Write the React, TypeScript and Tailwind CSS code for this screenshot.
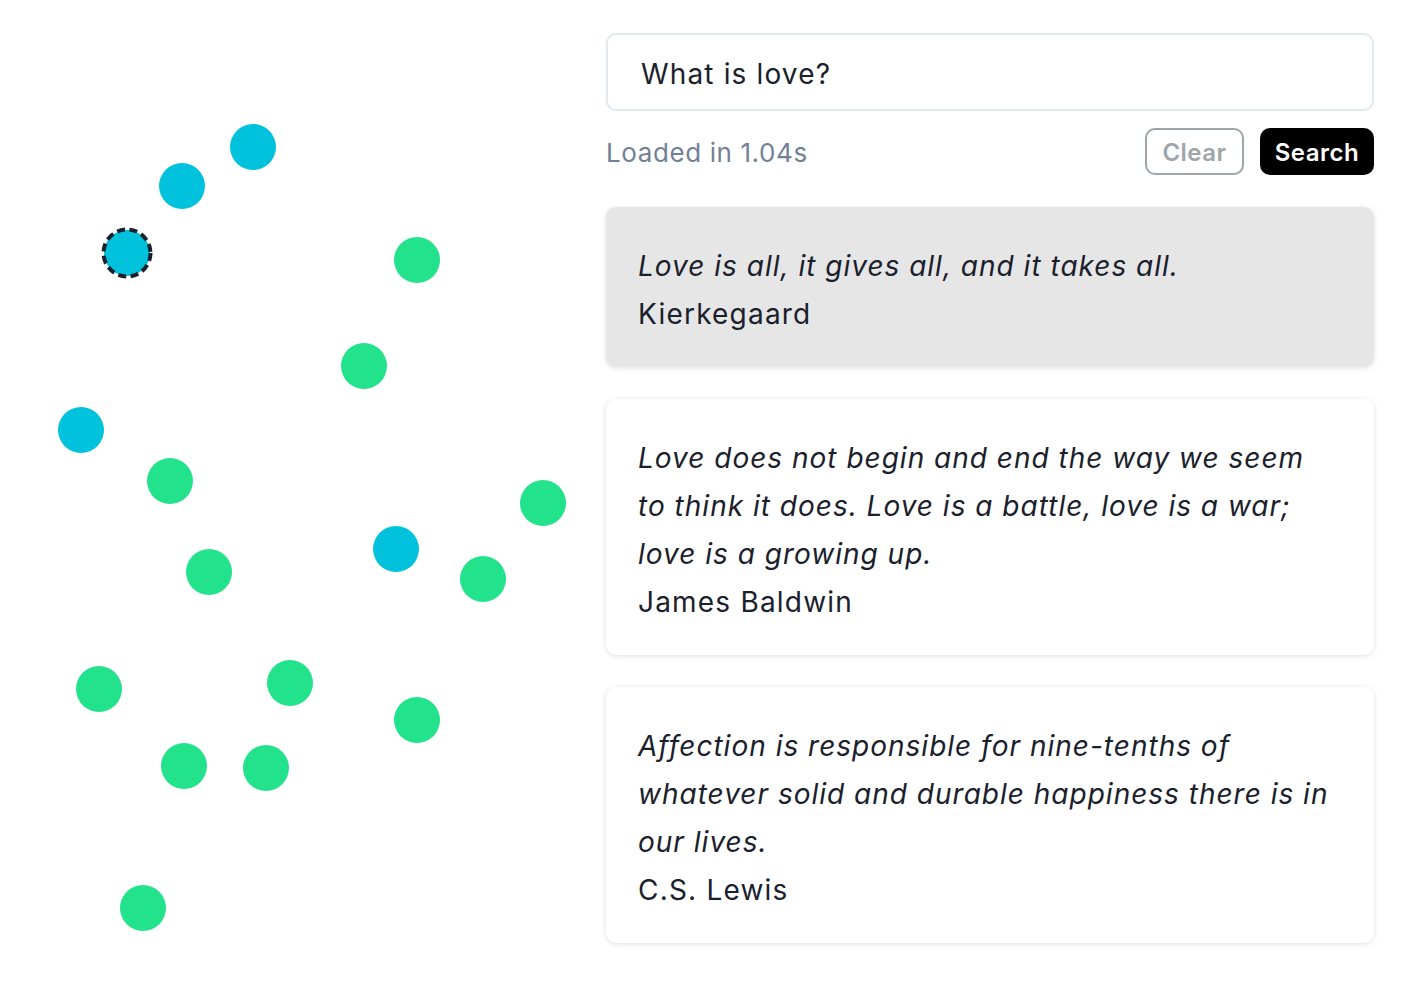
import React from "react";

type Dot = { x: number; y: number; kind: "cyan" | "green"; selected?: boolean };

const dots: Dot[] = [
  { x: 253, y: 147, kind: "cyan" },
  { x: 182, y: 186, kind: "cyan" },
  { x: 127, y: 253, kind: "cyan", selected: true },
  { x: 81, y: 430, kind: "cyan" },
  { x: 396, y: 549, kind: "cyan" },
  { x: 417, y: 260, kind: "green" },
  { x: 364, y: 366, kind: "green" },
  { x: 170, y: 481, kind: "green" },
  { x: 543, y: 503, kind: "green" },
  { x: 209, y: 572, kind: "green" },
  { x: 483, y: 579, kind: "green" },
  { x: 99, y: 689, kind: "green" },
  { x: 290, y: 683, kind: "green" },
  { x: 417, y: 720, kind: "green" },
  { x: 184, y: 766, kind: "green" },
  { x: 266, y: 768, kind: "green" },
  { x: 143, y: 908, kind: "green" },
];

const quotes = [
  {
    text: "Love is all, it gives all, and it takes all.",
    author: "Kierkegaard",
    active: true,
  },
  {
    text: "Love does not begin and end the way we seem to think it does. Love is a battle, love is a war; love is a growing up.",
    author: "James Baldwin",
  },
  {
    text: "Affection is responsible for nine-tenths of whatever solid and durable happiness there is in our lives.",
    author: "C.S. Lewis",
  },
];

function Scatter() {
  return (
    <svg width={574} height={992} className="block">
      {dots.map((d, i) => (
        <g key={i}>
          <circle cx={d.x} cy={d.y} r={23} fill={d.kind === "cyan" ? "#00c2dc" : "#22e38b"} />
          {d.selected && (
            <circle
              cx={d.x}
              cy={d.y}
              r={23.5}
              fill="none"
              stroke="#1a202c"
              strokeWidth={4}
              strokeDasharray="8 4.5"
            />
          )}
        </g>
      ))}
    </svg>
  );
}

export default function App() {
  return (
    <div
      className="flex h-[992px] w-full gap-8 bg-white text-[#1a202c]"
      style={{ fontFamily: "Inter, 'Noto Sans', sans-serif" }}
    >
      <div className="w-[574px] shrink-0">
        <Scatter />
      </div>

      <div className="flex w-[768px] shrink-0 flex-col pt-[33px]">
        <input
          readOnly
          value="What is love?"
          className="h-[78px] w-full rounded-[10px] border-2 border-[#e2e8f0] bg-white pt-[3px] pl-[33px] text-[28px] tracking-[1.15px] text-[#1a202c] outline-none"
        />

        <div className="mt-[17px] flex items-center">
          <span className="flex-1 pt-[2px] text-[26px] tracking-[0.6px] text-[#718096]">Loaded in 1.04s</span>
          <button
            type="button"
            className="h-[47px] w-[99px] rounded-[10px] border-2 border-[#a0a4ab] pt-[2px] text-[24px] font-semibold tracking-[0.5px] text-[#a0a4ab]"
          >
            Clear
          </button>
          <button
            type="button"
            className="ml-4 h-[47px] w-[114px] rounded-[10px] bg-black pt-[2px] text-[24px] font-semibold tracking-[0.5px] text-white"
          >
            Search
          </button>
        </div>

        <div className="mt-8 flex flex-col gap-8">
          {quotes.map((q, i) => (
            <div
              key={i}
              className={
                "rounded-[10px] pt-[35px] pr-[40px] pb-[29px] pl-8 text-[28px] leading-[48px] shadow-[0_1px_5px_rgba(0,0,0,0.13)] " +
                (q.active ? "bg-[#e6e6e6]" : "bg-white")
              }
            >
              <p className="italic tracking-[1px]">{q.text}</p>
              <p className="tracking-[1.2px]">{q.author}</p>
            </div>
          ))}
        </div>
      </div>
    </div>
  );
}
